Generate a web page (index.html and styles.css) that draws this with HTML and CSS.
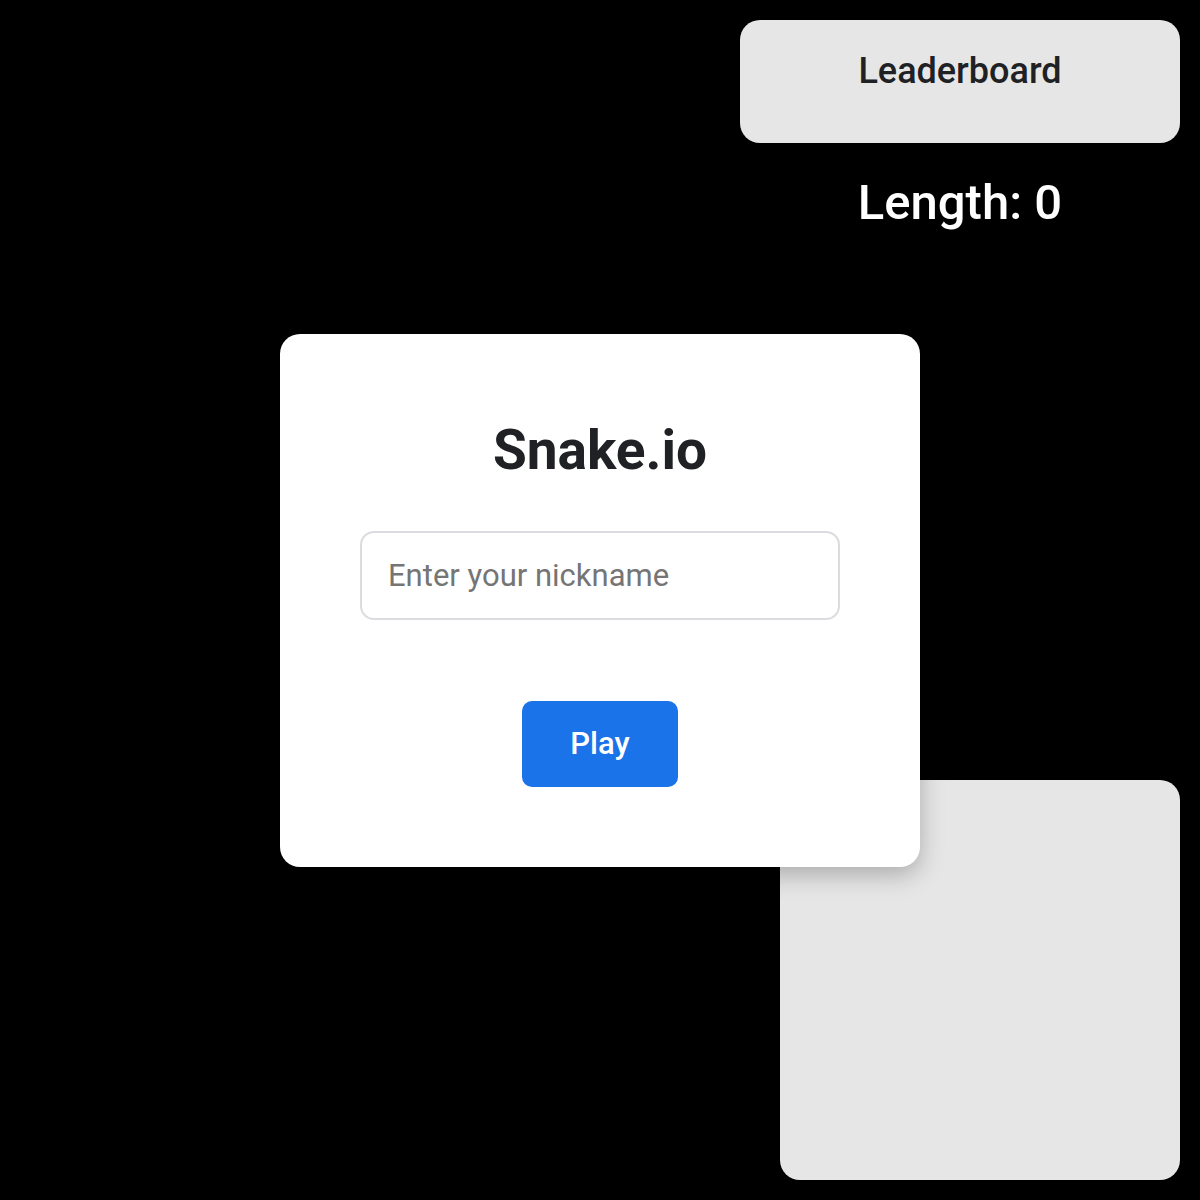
FILE: index.html
```html
<!DOCTYPE html>
<html lang="en">

<head>
  <meta charset="UTF-8">
  <meta name="viewport" content="width=device-width, initial-scale=1.0">
  <title>Snake.io</title>
  <link rel="stylesheet" href="styles.css">
</head>

<body>
  <div class="hud">
    <div class="leaderboard">Leaderboard</div>
    <div class="score">Length: 0</div>
  </div>

  <div class="minimap"></div>

  <div class="overlay">
    <div class="menu">
      <h1>Snake.io</h1>
      <input type="text" id="nickname" placeholder="Enter your nickname">
      <button id="play">Play</button>
    </div>
  </div>
</body>

</html>
```

FILE: styles.css
```css
body {
  font-family: Roboto, "Open Sans", sans-serif;
  margin: 0;
  background-color: #000;
  width: 1200px;
  height: 1200px;
  overflow: hidden;
}

.hud {
  position: absolute;
  top: 20px;
  right: 20px;
  width: 440px;
  display: flex;
  flex-direction: column;
  align-items: center;
}

.leaderboard {
  box-sizing: border-box;
  width: 100%;
  height: 123px;
  padding-top: 30px;
  background-color: #e6e6e6;
  border-radius: 20px;
  color: #202124;
  font-size: 36px;
  font-weight: 500;
  text-align: center;
}

.score {
  margin-top: 31px;
  color: #fff;
  font-size: 49px;
  font-weight: 500;
}

.minimap {
  position: absolute;
  right: 20px;
  bottom: 20px;
  width: 400px;
  height: 400px;
  background-color: #e6e6e6;
  border-radius: 20px;
}

.overlay {
  position: absolute;
  inset: 0;
  display: flex;
  align-items: center;
  justify-content: center;
}

.menu {
  box-sizing: border-box;
  width: 640px;
  padding: 84px 80px 80px;
  background-color: #fff;
  border-radius: 20px;
  box-shadow: 0 8px 24px rgba(0, 0, 0, 0.25);
  display: flex;
  flex-direction: column;
  align-items: center;
}

.menu h1 {
  margin: 0 0 49px;
  color: #202124;
  font-size: 55px;
  font-weight: 700;
}

#nickname {
  box-sizing: border-box;
  width: 100%;
  height: 89px;
  padding: 0 26px;
  border: 2px solid #dadce0;
  border-radius: 14px;
  font-family: inherit;
  font-size: 31px;
  color: #202124;
  outline: none;
}

#nickname::placeholder {
  color: #757575;
}

#play {
  margin-top: 81px;
  width: 156px;
  height: 86px;
  background-color: #1a73e8;
  color: #fff;
  border: none;
  border-radius: 10px;
  font-family: inherit;
  font-size: 31px;
  font-weight: 500;
  cursor: pointer;
}
```
